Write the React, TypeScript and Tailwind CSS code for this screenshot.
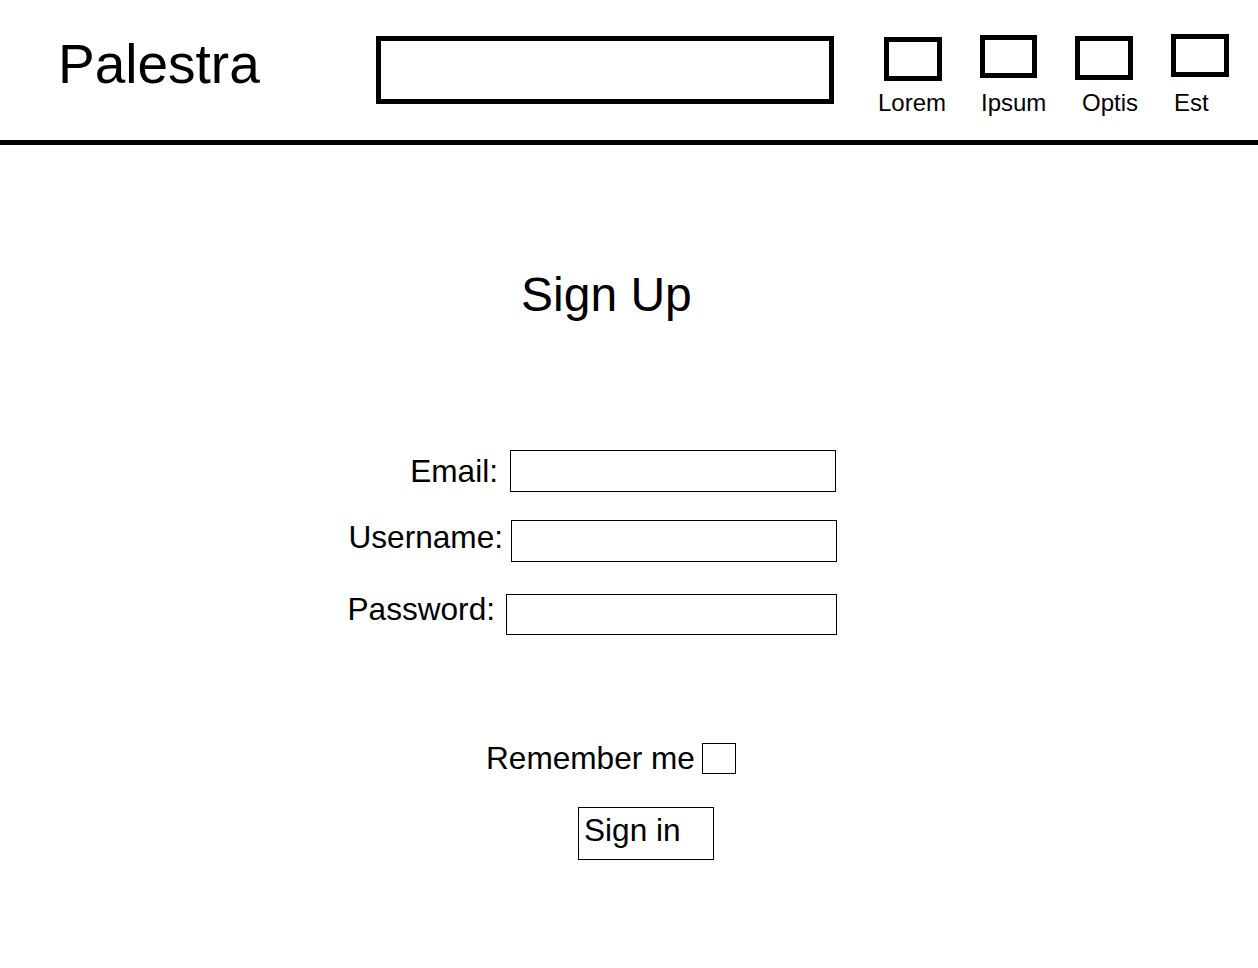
import React from "react";

const navItems = [
  { label: "Lorem", ml: 44, w: 66, boxMl: 6, boxMt: 37, boxW: 58, boxH: 44, labelMl: 0 },
  { label: "Ipsum", ml: 36, w: 64, boxMl: 0, boxMt: 35, boxW: 57, boxH: 43, labelMl: 1 },
  { label: "Optis", ml: 31, w: 61, boxMl: 0, boxMt: 36, boxW: 58, boxH: 44, labelMl: 7 },
  { label: "Est", ml: 35, w: 58, boxMl: 0, boxMt: 34, boxW: 58, boxH: 43, labelMl: 3 },
];

function NavItem({ item }: { item: (typeof navItems)[number] }) {
  return (
    <div className="flex flex-col items-start shrink-0" style={{ marginLeft: item.ml, width: item.w }}>
      <div
        className="border-[5px] border-black bg-white shrink-0"
        style={{ marginLeft: item.boxMl, marginTop: item.boxMt, width: item.boxW, height: item.boxH }}
      />
      <span
        className="text-[24px] leading-none text-black whitespace-nowrap"
        style={{ marginLeft: item.labelMl, marginTop: 90.7 - item.boxMt - item.boxH }}
      >
        {item.label}
      </span>
    </div>
  );
}

export default function App() {
  return (
    <div
      className="w-[1258px] h-[968px] bg-white text-black overflow-hidden"
      style={{ fontFamily: '"Liberation Sans", Arial, sans-serif' }}
    >
      <header className="flex items-start h-[145px] border-b-[5px] border-black">
        <div className="w-[376px] pl-[58px] pt-[37px] shrink-0">
          <span className="text-[55px] leading-none">Palestra</span>
        </div>
        <div className="mt-[36px] w-[458px] h-[68px] border-[5px] border-black shrink-0" />
        {navItems.map((it) => (
          <NavItem key={it.label} item={it} />
        ))}
      </header>

      <main className="flex flex-col">
        <div className="pl-[521px] mt-[126px]">
          <h1 className="text-[48px] leading-none font-normal">Sign Up</h1>
        </div>

        <div className="mt-[131px] flex flex-col w-[837px]">
          <div className="flex items-start justify-end">
            <span className="text-[31.6px] leading-none mt-[6px] mr-[12px]">Email:</span>
            <div className="w-[326px] h-[42px] border border-black mr-[1px]" />
          </div>
          <div className="flex items-start justify-end mt-[28px]">
            <span className="text-[31.6px] leading-none mt-[2px] mr-[8px]">Username:</span>
            <div className="w-[326px] h-[42px] border border-black" />
          </div>
          <div className="flex items-start justify-end mt-[32px]">
            <span className="text-[31.6px] leading-none mr-[11px]">Password:</span>
            <div className="w-[331px] h-[41px] border border-black" />
          </div>
        </div>

        <div className="mt-[108px] flex items-start pl-[486px]">
          <span className="text-[31.6px] leading-none">Remember me</span>
          <div className="ml-[7px] w-[34px] h-[31px] border border-black" />
        </div>

        <div className="mt-[32px] pl-[578px]">
          <button className="w-[136px] h-[53px] border border-black bg-white text-left pl-[5px] pt-[7px] flex items-start">
            <span className="text-[31.6px] leading-none">Sign in</span>
          </button>
        </div>
      </main>
    </div>
  );
}
